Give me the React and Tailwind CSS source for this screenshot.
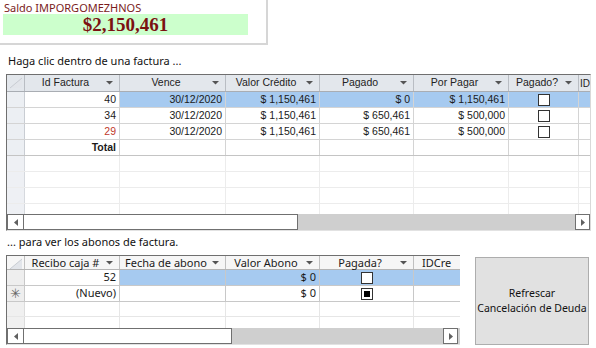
import React from 'react';

const ARIAL = "font-['Liberation_Sans',Arial,sans-serif]";
const TAHOMA = "font-['Noto_Sans',Tahoma,sans-serif]";

function DropArrow() {
  return (
    <svg width="7" height="4" viewBox="0 0 7 4" className="shrink-0">
      <polygon points="0,0 7,0 3.5,3.5" fill="#555" />
    </svg>
  );
}

function Corner() {
  return (
    <svg width="14" height="12" viewBox="0 0 14 12" className="absolute left-[2px] top-[2px]">
      <polygon points="1,11 13,1 13,11" fill="#e2e5ea" />
      <line x1="1" y1="11" x2="13" y2="1" stroke="#c8ccd2" strokeWidth="1" />
    </svg>
  );
}

function Check({ filled }) {
  return (
    <div className="w-[12px] h-[12px] border border-[#333] bg-white flex items-center justify-center">
      {filled && <div className="w-[6px] h-[6px] bg-black" />}
    </div>
  );
}

function ScrollBar({ thumb, arrowRight }) {
  return (
    <div className="flex h-[16px] bg-[#cfcfcf]">
      <div className="w-[17px] h-full border border-[#707070] bg-white flex items-center justify-center">
        <svg width="4" height="7" viewBox="0 0 4 7">
          <polygon points="4,0 4,7 0,3.5" fill="#606060" />
        </svg>
      </div>
      <div className={`h-full border border-l-0 border-[#707070] bg-white ${thumb}`} />
      <div className="flex-1" />
      <div className={`w-[15px] h-full border border-[#707070] bg-white flex items-center justify-center ${arrowRight}`}>
        <svg width="4" height="7" viewBox="0 0 4 7">
          <polygon points="0,0 0,7 4,3.5" fill="#606060" />
        </svg>
      </div>
    </div>
  );
}

const cols1 = [
  { name: 'Id Factura', w: 'w-[95px]' },
  { name: 'Vence', w: 'w-[106px]' },
  { name: 'Valor Crédito', w: 'w-[94px]' },
  { name: 'Pagado', w: 'w-[94px]' },
  { name: 'Por Pagar', w: 'w-[95px]' },
  { name: 'Pagado?', w: 'w-[70px]' },
];

const facturas = [
  { id: '40', vence: '30/12/2020', valor: '$ 1,150,461', pagado: '$ 0', porPagar: '$ 1,150,461', sel: true },
  { id: '34', vence: '30/12/2020', valor: '$ 1,150,461', pagado: '$ 650,461', porPagar: '$ 500,000' },
  { id: '29', vence: '30/12/2020', valor: '$ 1,150,461', pagado: '$ 650,461', porPagar: '$ 500,000', red: true },
];

function FacturasTable() {
  const cell = 'h-full border-r border-[#d4d4d4] flex items-center justify-end pr-[3px]';
  return (
    <div className={`ml-[6px] w-[585px] border-l border-t border-[#6f6f6f] border-r border-r-[#d9d9d9] border-b border-b-[#e2e2e2] text-[10.5px] text-[#1a1a1a] ${ARIAL}`}>
      {/* header */}
      <div className="flex h-[17px] bg-[#e3e7ec] border-b border-[#a9adb3]">
        <div className="relative w-[18px] h-full border-r border-[#b9bdc3]">
          <Corner />
        </div>
        {cols1.map((c) => (
          <div key={c.name} className={`${c.w} h-full border-r border-[#b9bdc3] flex items-center pr-[6px] text-[#222]`}>
            <span className="flex-1 text-center">{c.name}</span>
            <DropArrow />
          </div>
        ))}
        <div className="flex-1 h-full flex items-center pl-[1px] overflow-hidden text-[10px] text-[#222]">ID</div>
      </div>

      {facturas.map((f) => (
        <div key={f.id} className="flex h-[16px] border-b border-[#d4d4d4]">
          <div className="w-[18px] h-full bg-[#eceff3] border-r border-[#c9cdd3]" />
          <div className={`w-[95px] bg-white ${cell} ${f.red ? 'text-[#c0392b]' : ''}`}>{f.id}</div>
          <div className={`flex flex-1 h-full ${f.sel ? 'bg-[#a6caf0]' : 'bg-white'}`}>
            <div className={`w-[106px] ${cell}`}>{f.vence}</div>
            <div className={`w-[94px] ${cell}`}>{f.valor}</div>
            <div className={`w-[94px] ${cell}`}>{f.pagado}</div>
            <div className={`w-[95px] ${cell}`}>{f.porPagar}</div>
            <div className="w-[70px] h-full border-r border-[#d4d4d4] flex items-center justify-center">
              <Check />
            </div>
            <div className="flex-1" />
          </div>
        </div>
      ))}

      {/* total */}
      <div className="flex h-[16px] border-b border-[#c4c4c4] bg-white">
        <div className="w-[18px] h-full bg-[#eceff3] border-r border-[#c9cdd3]" />
        <div className={`w-[95px] ${cell} font-bold`}>Total</div>
        <div className="w-[106px] h-full border-r border-[#d4d4d4]" />
        <div className="w-[94px] h-full border-r border-[#d4d4d4]" />
        <div className="w-[94px] h-full border-r border-[#d4d4d4]" />
        <div className="w-[95px] h-full border-r border-[#d4d4d4]" />
        <div className="w-[70px] h-full border-r border-[#d4d4d4]" />
      </div>

      {['h-[16px]', 'h-[16px]', 'h-[16px]', 'h-[10px]'].map((h, i) => (
        <div key={i} className={`flex ${h} ${i < 3 ? 'border-b border-[#ececec]' : ''} bg-white`}>
          <div className="w-[18px] h-full bg-[#eef0f4] border-r border-[#d6d9de]" />
          <div className="w-[95px] h-full border-r border-[#ececec]" />
          <div className="w-[106px] h-full border-r border-[#ececec]" />
          <div className="w-[94px] h-full border-r border-[#ececec]" />
          <div className="w-[94px] h-full border-r border-[#ececec]" />
          <div className="w-[95px] h-full border-r border-[#ececec]" />
          <div className="w-[70px] h-full border-r border-[#ececec]" />
        </div>
      ))}

      <ScrollBar thumb="w-[274px]" arrowRight="" />
    </div>
  );
}

const cols2 = [
  { name: 'Recibo caja #', w: 'w-[95px]' },
  { name: 'Fecha de abono', w: 'w-[106px]' },
  { name: 'Valor Abono', w: 'w-[94px]' },
  { name: 'Pagada?', w: 'w-[94px]' },
];

function AbonosTable() {
  const cell = 'h-full border-r border-[#c8c8c8] flex items-center justify-end pr-[3px]';
  return (
    <div className={`ml-[6px] w-[454px] border-l border-t border-[#6f6f6f] border-b border-b-[#e2e2e2] text-[11px] text-[#1a1a1a] ${TAHOMA}`}>
      <div className="flex h-[14px] bg-[#f6f6f6] border-b border-[#b4b4b4]">
        <div className="relative w-[18px] h-full border-r border-[#c0c0c0] overflow-hidden">
          <Corner />
        </div>
        {cols2.map((c) => (
          <div key={c.name} className={`${c.w} h-full border-r border-[#c0c0c0] flex items-center pr-[6px] leading-none`}>
            <span className="flex-1 text-center">{c.name}</span>
            <DropArrow />
          </div>
        ))}
        <div className="flex-1 h-full flex items-center pl-[8px] leading-none overflow-hidden">IDCre</div>
      </div>

      <div className="flex h-[16px] border-b border-[#c8c8c8]">
        <div className="w-[18px] h-full bg-[#eeeeee] border-r border-[#c8c8c8]" />
        <div className={`w-[95px] bg-white ${cell}`}>52</div>
        <div className="flex flex-1 h-full bg-[#a6caf0]">
          <div className={`w-[106px] ${cell}`} />
          <div className={`w-[94px] ${cell}`}>$ 0</div>
          <div className="w-[94px] h-full border-r border-[#c8c8c8] flex items-center justify-center">
            <Check />
          </div>
          <div className="flex-1" />
        </div>
      </div>

      <div className="flex h-[16px] border-b border-[#c8c8c8] bg-white">
        <div className="w-[18px] h-full bg-[#eeeeee] border-r border-[#c8c8c8] flex items-center justify-center text-[13px] text-[#666] leading-none">✳</div>
        <div className={`w-[95px] ${cell}`}>(Nuevo)</div>
        <div className={`w-[106px] ${cell}`} />
        <div className={`w-[94px] ${cell}`}>$ 0</div>
        <div className="w-[94px] h-full border-r border-[#c8c8c8] flex items-center justify-center">
          <Check filled />
        </div>
      </div>

      {['h-[15px]', 'h-[11px]'].map((h, i) => (
        <div key={i} className={`flex ${h} ${i === 0 ? 'border-b border-[#e6e6e6]' : ''} bg-white`}>
          <div className="w-[18px] h-full bg-[#f0f0f0] border-r border-[#dcdcdc]" />
          <div className="w-[95px] h-full border-r border-[#e6e6e6]" />
          <div className="w-[106px] h-full border-r border-[#e6e6e6]" />
          <div className="w-[94px] h-full border-r border-[#e6e6e6]" />
          <div className="w-[94px] h-full border-r border-[#e6e6e6]" />
        </div>
      ))}

      <ScrollBar thumb="w-[208px]" arrowRight="mr-[2px]" />
    </div>
  );
}

export default function App() {
  return (
    <div className="w-[596px] h-[348px] bg-white overflow-hidden relative">
      <div className="w-[268px] h-[45px] border-r-2 border-b-2 border-[#d6d6d6]">
        <div className={`pl-[4px] pt-[1px] h-[14px] text-[11px] leading-[14px] text-[#7a1c1c] ${TAHOMA}`}>
          Saldo IMPORGOMEZHNOS
        </div>
        <div className="ml-[3px] w-[245px] h-[21px] bg-[#ccffcc] flex items-center justify-center">
          <span className="font-['Liberation_Serif',serif] font-bold text-[19px] leading-none text-[#7b1111]">
            $2,150,461
          </span>
        </div>
      </div>

      <div className={`mt-[9px] ml-[8px] h-[13px] text-[11px] leading-[13px] text-[#111] ${TAHOMA}`}>
        Haga clic dentro de una factura ...
      </div>

      <div className="mt-[7px]">
        <FacturasTable />
      </div>

      <div className={`mt-[4px] ml-[7px] h-[13px] text-[11px] leading-[13px] text-[#111] ${TAHOMA}`}>
        ... para ver los abonos de factura.
      </div>

      <div className="mt-[7px] flex items-start">
        <AbonosTable />
        <div className={`ml-[15px] mt-[2px] w-[114px] h-[88px] bg-[#e1e1e1] border border-[#adadad] flex items-center justify-center text-center text-[10.5px] leading-[15px] whitespace-nowrap text-[#111] ${TAHOMA}`}>
          <div>
            Refrescar
            <br />
            Cancelación de Deuda
          </div>
        </div>
      </div>
    </div>
  );
}
